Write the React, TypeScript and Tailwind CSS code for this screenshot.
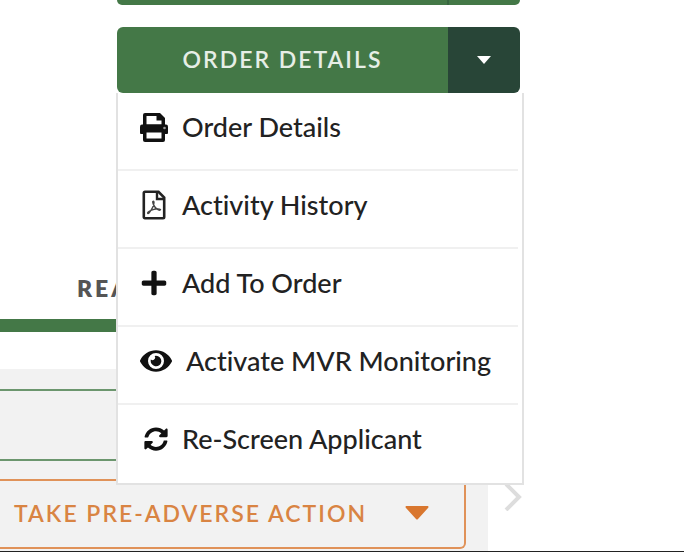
import React from 'react';
import { FaEye, FaPlus, FaSyncAlt } from 'react-icons/fa';

interface MenuItem {
  label: string;
  icon: React.ReactNode;
}

const PrintIcon: React.FC = () => (
  <svg viewBox="0 0 28 30" className="h-[30px] w-7" fill="none" aria-hidden="true">
    <path d="M5 1H20L25 6V14H3V3Q3 1 5 1Z" fill="#111" />
    <path d="M6.5 4H16.5V8.5H21.5V12.5H6.5Z" fill="#fff" />
    <path d="M2 12.5H26Q28 12.5 28 14.5V21Q28 22 27 22H1Q0 22 0 21V14.5Q0 12.5 2 12.5Z" fill="#111" />
    <path d="M3 19H25V28Q25 30 23 30H5Q3 30 3 28Z" fill="#111" />
    <path d="M6.5 20.5H21.5V26.5H6.5Z" fill="#fff" />
    <circle cx="24.5" cy="16" r="1.3" fill="#999" />
  </svg>
);

const PdfIcon: React.FC = () => (
  <svg viewBox="0 0 28 30" className="h-[30px] w-7" fill="none" stroke="#222" aria-hidden="true">
    <path d="M5 1.8H18.5L24.2 7.5V27Q24.2 28.2 23 28.2H5Q3.8 28.2 3.8 27V3Q3.8 1.8 5 1.8Z" strokeWidth="2.6" />
    <path d="M17 2V9H24" strokeWidth="2.4" />
    <path
      d="M12.8 11.5Q13.8 10.8 14 12.5Q13.8 17 9 23Q7.8 24.2 7.6 23Q8 21 14 19.3Q19 18.3 20.5 19.5Q20.3 20.8 18 19.6Q14 17.5 12.8 12.5Z"
      stroke="#444"
      strokeWidth="1.4"
    />
  </svg>
);

const items: MenuItem[] = [
  { label: 'Order Details', icon: <PrintIcon /> },
  { label: 'Activity History', icon: <PdfIcon /> },
  { label: 'Add To Order', icon: <FaPlus className="h-7 w-7" /> },
  { label: 'Activate MVR Monitoring', icon: <FaEye className="h-8 w-8" /> },
  { label: 'Re-Screen Applicant', icon: <FaSyncAlt className="ml-1 h-6 w-6" /> },
];

const OrderMenu: React.FC = () => (
  <ul className="absolute -right-1 -left-px top-full z-10 border-x-2 border-b-2 border-[#e2e2e2] bg-white pr-1 pb-[2px]">
    {items.map((item) => (
      <li key={item.label} className="border-b-2 border-[#f0f0f0] last:border-b-0">
        <button
          type="button"
          className="flex h-[76px] w-full items-center gap-[14px] pb-2 pl-[22px] text-left text-[27px] leading-8 font-medium whitespace-nowrap text-[#222] [font-variant-ligatures:none]"
        >
          <span className="flex min-w-7 shrink-0 justify-center text-[#111]">{item.icon}</span>
          {item.label}
        </button>
      </li>
    ))}
  </ul>
);

const App: React.FC = () => {
  return (
    <main className="overflow-hidden border-b border-[#222] bg-white font-['Lato',sans-serif]">
      <div className="pr-[164px] pl-[117px]">
        <div className="flex h-[5px] overflow-hidden rounded-b-md bg-[#447847]">
          <div className="flex-1 border-r-2 border-[#386640]" />
          <div className="w-[71px]" />
        </div>
        <div className="relative mt-[22px] flex h-[66px]">
          <button
            type="button"
            className="flex-1 rounded-l-md bg-[#447847] pb-[2px] text-[23px] font-semibold tracking-[2px] text-[#e6eee6]"
          >
            ORDER DETAILS
          </button>
          <button
            type="button"
            aria-label="More order actions"
            className="flex w-[72px] items-center justify-center rounded-r-md bg-[#284537]"
          >
            <svg viewBox="0 0 14 8" className="h-2 w-[14px]" aria-hidden="true">
              <path d="M0 0H14L7 8Z" fill="#fff" />
            </svg>
          </button>
          <OrderMenu />
        </div>
      </div>

      <h2 className="mt-[179px] pl-[77px] text-[23px] leading-8 font-extrabold tracking-[3px] text-[#555]">REA</h2>
      <div className="mt-[15px] mr-[196px] h-[13px] bg-[#447847]" />

      <div className="mt-[37px] flex">
        <section className="flex-1 bg-[#f2f2f2] pt-5 pr-[22px] pb-[2px]">
          <div className="h-[72px] rounded-r-md border-y-2 border-r-2 border-[#6c966e]" />
          <button
            type="button"
            className="mt-[18px] flex h-[70px] w-full items-center justify-between rounded-r-md border-y-2 border-r-2 border-[#e09259] pr-[35px] pb-[2px] pl-[14px] text-[23px] font-semibold tracking-[2px] whitespace-nowrap text-[#d98443]"
          >
            TAKE PRE-ADVERSE ACTION
            <svg viewBox="0 0 24 14" className="h-[14px] w-6" aria-hidden="true">
              <path d="M1 0H23Q24 1 23 2L13 13Q12 14 11 13L1 2Q0 1 1 0Z" fill="#d9772f" />
            </svg>
          </button>
        </section>
        <div className="flex w-[196px] items-end pb-10 pl-4">
          <svg viewBox="0 0 18 28" className="h-7 w-[18px]" fill="none" aria-hidden="true">
            <path d="M2 1L15 14L2 27" stroke="#ddd" strokeWidth="4" />
          </svg>
        </div>
      </div>
    </main>
  );
};

export default App;
